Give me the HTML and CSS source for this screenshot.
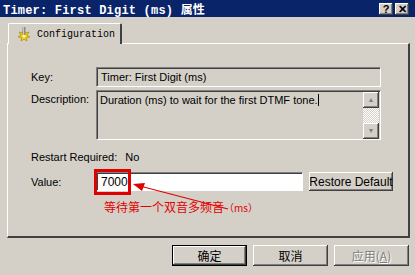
FILE: index.html
```html
<!DOCTYPE html>
<html lang="zh-CN">
<head>
  <meta charset="UTF-8" />
  <title>Timer: First Digit (ms) 属性</title>
  <link rel="stylesheet" href="styles.css">
</head>
<body>
  <div class="titlebar">
    <span class="caption">Timer: First Digit (ms) 属性</span>
    <div class="caption-btns">
      <span class="cbtn">?</span>
      <span class="cbtn">✕</span>
    </div>
  </div>

  <div class="tabstrip">
    <div class="tab">
      <svg class="tab-icon" width="16" height="16" viewBox="0 0 16 16">
        <polygon points="8,3 9.5,6 13,5 11,8 14,10 10.5,10.5 11,14 8,12 5,14 5.5,10.5 2,10 5,8 3,5 6.5,6" fill="#f0d000" stroke="#a08000" stroke-width="0.6"/>
        <circle cx="8" cy="9" r="1.6" fill="#fff8b0"/>
        <rect x="6.5" y="0" width="3" height="8" fill="#8a8a8a"/>
        <rect x="7" y="0" width="1" height="8" fill="#c8c8c8"/>
      </svg>
      <span>Configuration</span>
    </div>
  </div>

  <div class="panel">
    <div class="row">
      <span class="label">Key:</span>
      <div class="field readonly">Timer: First Digit (ms)</div>
    </div>
    <div class="row desc-row">
      <span class="label">Description:</span>
      <div class="field memo">
        <span class="memo-text">Duration (ms) to wait for the first DTMF tone.<span class="caret"></span></span>
        <div class="scrollbar">
          <span class="sbtn">▲</span>
          <span class="track"></span>
          <span class="sbtn">▼</span>
        </div>
      </div>
    </div>
    <div class="restart">
      <span>Restart Required:</span>
      <span class="restart-val">No</span>
    </div>
    <div class="row value-row">
      <span class="label">Value:</span>
      <div class="field edit">7000</div>
      <button class="btn restore">Restore Default</button>
    </div>
    <div class="note">等待第一个双音多频音<span class="note-ms">（ms）</span></div>

    <div class="mark"></div>
    <svg class="arrow" width="100" height="30" viewBox="0 0 100 30">
      <line x1="4" y1="3" x2="96" y2="27" stroke="#e00000" stroke-width="1.2"/>
      <polygon points="1,2 13,1 10,9" fill="#e00000"/>
    </svg>
  </div>

  <div class="footer">
    <button class="btn default">确定</button>
    <button class="btn">取消</button>
    <button class="btn disabled">应用(<u>A</u>)</button>
  </div>
</body>
</html>
```

FILE: styles.css
```css
body {
  margin: 0;
  width: 415px;
  height: 275px;
  background: #d4d0c8;
  font-family: "Liberation Sans", Arial, "Noto Sans CJK SC", sans-serif;
  font-size: 11px;
  color: #000;
  overflow: hidden;
}

.titlebar {
  height: 17px;
  background: #0a246a;
  color: #fff;
  display: flex;
  align-items: center;
  justify-content: space-between;
  padding: 0 6px 0 3px;
}
.caption {
  font-family: "Liberation Mono", "Noto Sans CJK SC", monospace;
  font-weight: bold;
  font-size: 12px;
  letter-spacing: 0.2px;
}
.caption-btns {
  display: flex;
  gap: 2px;
}
.cbtn {
  width: 14px;
  height: 12px;
  background: #d4d0c8;
  color: #000;
  font-size: 11px;
  font-weight: bold;
  line-height: 12px;
  text-align: center;
  box-shadow: inset -1px -1px #404040, inset 1px 1px #fff, inset -2px -2px #808080;
}

.tabstrip {
  padding: 6px 0 0 8px;
  display: flex;
}
.tab {
  height: 21px;
  width: 114px;
  box-sizing: border-box;
  display: flex;
  align-items: center;
  gap: 5px;
  padding: 1px 0 0 7px;
  border-top: 1px solid #fff;
  border-left: 1px solid #fff;
  border-right: 2px solid #404040;
  border-radius: 2px 2px 0 0;
  background: #d4d0c8;
  font-family: "Liberation Mono", monospace;
  font-size: 10px;
  position: relative;
  z-index: 1;
  margin-bottom: -1px;
}

.panel {
  position: relative;
  margin: 0 5px 0 7px;
  height: 195px;
  box-sizing: border-box;
  border-top: 1px solid #fff;
  border-left: 1px solid #fff;
  border-right: 2px solid #404040;
  border-bottom: 2px solid #404040;
  padding: 23px 27px 0 23px;
  display: flex;
  flex-direction: column;
}

.row {
  display: flex;
  align-items: center;
}
.label {
  width: 65px;
  flex: none;
}
.field {
  box-sizing: border-box;
  border-top: 1px solid #808080;
  border-left: 1px solid #808080;
  border-right: 1px solid #fff;
  border-bottom: 1px solid #fff;
  box-shadow: inset 1px 1px #404040;
}
.readonly {
  flex: 1;
  height: 20px;
  padding: 3px 4px;
  background: #d4d0c8;
}
.desc-row {
  margin-top: 3px;
  align-items: flex-start;
}
.desc-row .label {
  padding-top: 3px;
}
.memo {
  flex: 1;
  height: 50px;
  display: flex;
  background: #d4d0c8;
}
.memo-text {
  flex: 1;
  padding: 3px 3px;
}
.caret {
  display: inline-block;
  width: 1px;
  height: 12px;
  background: #000;
  vertical-align: -2px;
}
.scrollbar {
  width: 16px;
  display: flex;
  flex-direction: column;
  margin: 1px 1px 0 0;
}
.sbtn {
  height: 16px;
  background: #d4d0c8;
  color: #808080;
  font-size: 7px;
  line-height: 16px;
  text-align: center;
  box-shadow: inset -1px -1px #404040, inset 1px 1px #fff, inset -2px -2px #808080;
}
.track {
  flex: 1;
  background: repeating-conic-gradient(#fff 0 25%, #d4d0c8 0 50%) 0 0 / 2px 2px;
}

.restart {
  margin-top: 11px;
  display: flex;
}
.restart-val {
  margin-left: 8px;
}

.value-row {
  margin-top: 9px;
}
.edit {
  flex: none;
  width: 207px;
  height: 19px;
  padding: 2px 4px;
  background: #fff;
  font-size: 12px;
}
.btn {
  box-sizing: border-box;
  background: #d4d0c8;
  border: none;
  font-family: "Liberation Sans", Arial, "Noto Sans CJK SC", sans-serif;
  font-size: 11px;
  color: #000;
  padding: 0;
  box-shadow: inset -1px -1px #404040, inset 1px 1px #fff, inset -2px -2px #808080;
}
.restore {
  flex: none;
  width: 84px;
  height: 19px;
  margin-left: 6px;
  margin-right: -12px;
  font-size: 12px;
  white-space: nowrap;
}

.note {
  margin: 7px 0 0 73px;
  color: #e00000;
  font-family: "Noto Sans CJK SC", sans-serif;
  font-size: 12px;
}
.note-ms {
  font-size: 10px;
}

.mark {
  position: absolute;
  left: 86px;
  top: 125px;
  width: 37px;
  height: 26px;
  box-sizing: border-box;
  border: 3px solid #e00000;
}
.arrow {
  position: absolute;
  left: 124px;
  top: 138px;
}

.footer {
  margin-top: 7px;
  display: flex;
  justify-content: flex-end;
  gap: 6px;
  padding-right: 6px;
}
.footer .btn {
  width: 75px;
  height: 21px;
  font-family: "Noto Sans CJK SC", sans-serif;
  font-size: 12px;
}
.footer .default {
  border: 1px solid #000;
  box-shadow: inset -1px -1px #404040, inset 1px 1px #fff, inset -2px -2px #808080;
}
.footer .disabled {
  color: #808080;
  text-shadow: 1px 1px #fff;
}
```
